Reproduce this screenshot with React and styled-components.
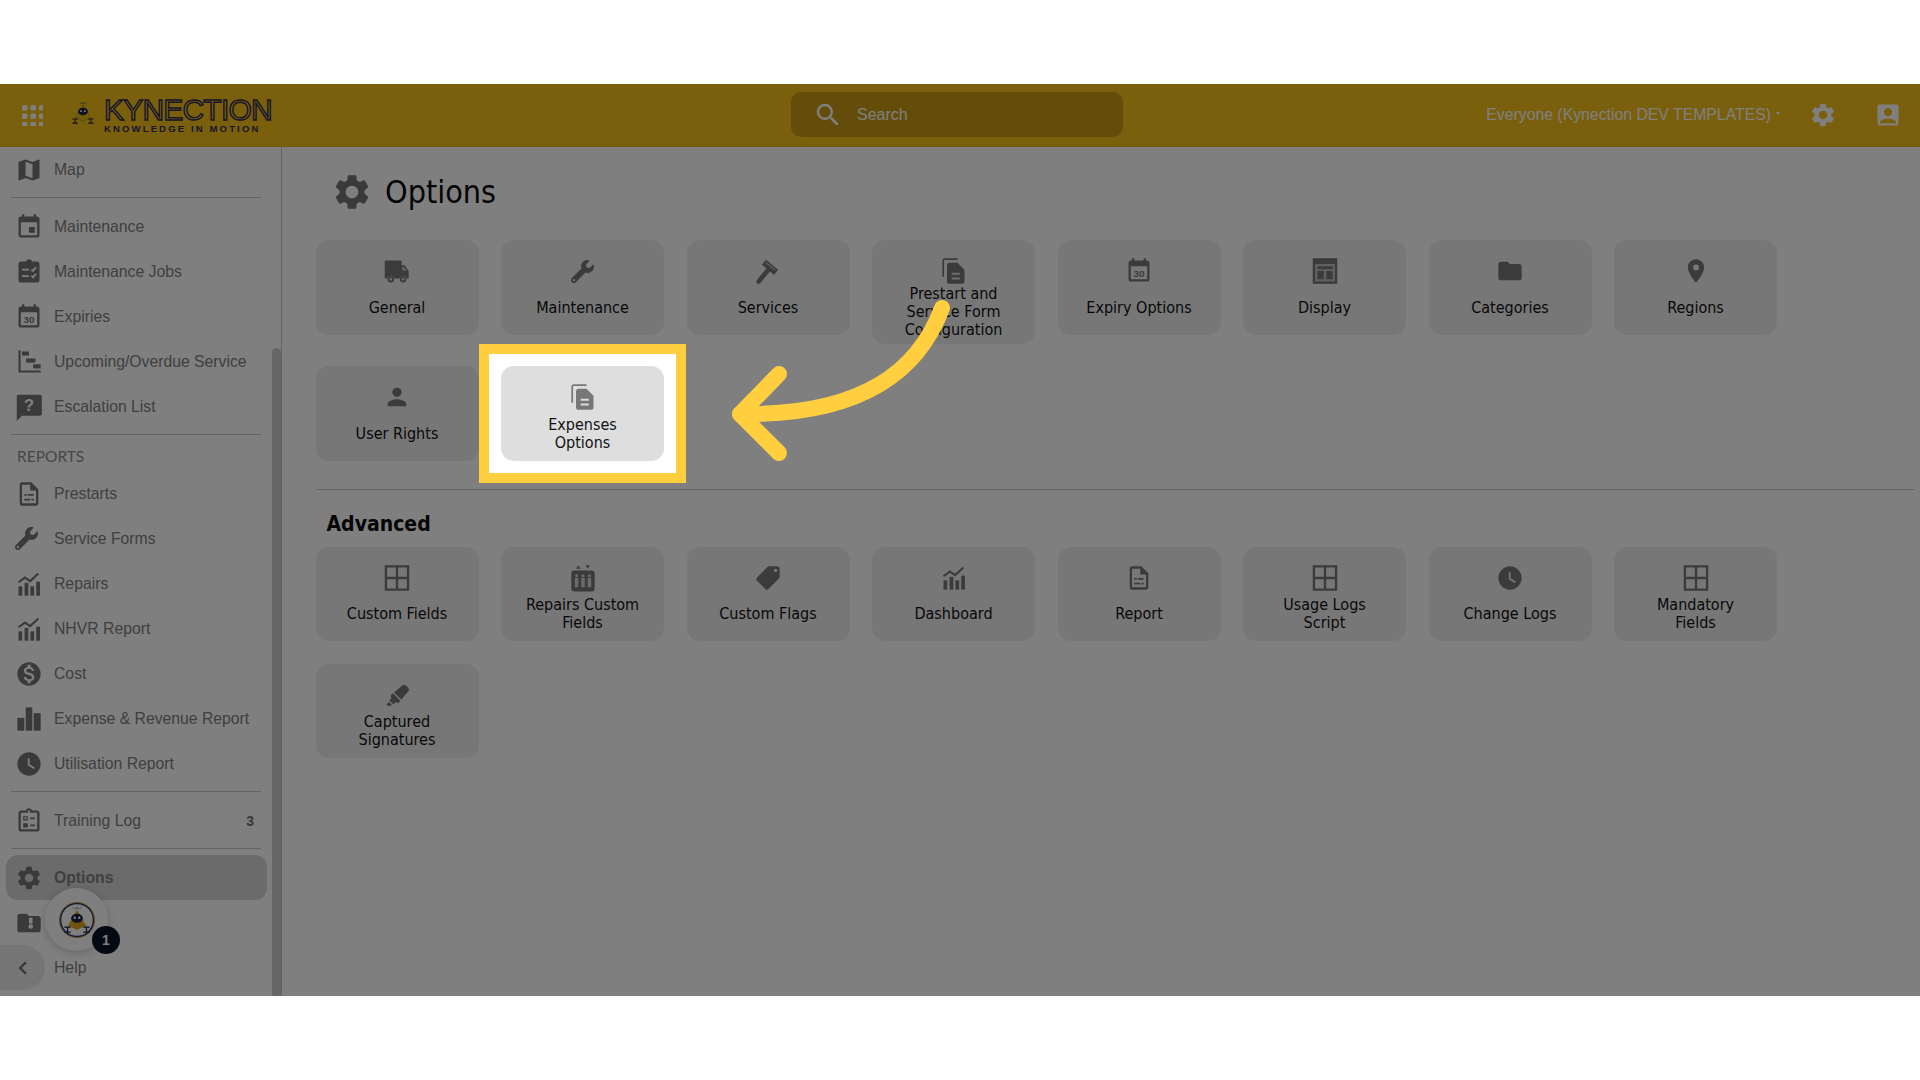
import React from 'react';
import styled, { createGlobalStyle } from 'styled-components';
import {
  MdMap, MdEvent, MdMonetizationOn, MdWatchLater, MdSettings,
  MdFolder, MdPlace, MdPerson, MdSearch, MdAccountBox, MdChevronLeft,
} from 'react-icons/md';
import { FaHighlighter, FaWrench } from 'react-icons/fa';

const GlobalStyles = createGlobalStyle`
  html { box-sizing: border-box; }
  *, *:before, *:after { box-sizing: inherit; }
  body {
    margin: 0;
    background: #fff;
    font-family: "Liberation Sans", Arial, sans-serif;
  }
`;

const Stage = styled.div`
  height: 1080px;
  padding: 84px 0;
  background: #fff;
`;

const AppFrame = styled.div`
  position: relative;
  height: 912px;
  overflow: hidden;
  display: flex;
  flex-direction: column;
  background: #fff;
`;

const TopBar = styled.header`
  flex: none;
  height: 63px;
  padding-bottom: 1px;
  display: grid;
  grid-template-columns: 791px 332px 1fr;
  align-items: center;
  background: #f5bf18;
  border-bottom: 1px solid #e3b116;
`;

const BarLeft = styled.div`
  display: flex;
  align-items: center;
  padding-left: 21px;
`;

const Waffle = styled.svg`
  width: 22px;
  height: 22px;
  fill: #fff;
  margin-right: 25px;
`;

const Brand = styled.div`
  display: flex;
  align-items: center;
  gap: 6px;
`;

const BrandMark = styled.span`
  width: 30px;
  height: 34px;
`;

const BrandText = styled.div`
  display: flex;
  flex-direction: column;
  width: 167px;
  padding-top: 2px;
`;

const BrandName = styled.span`
  font-size: 30px;
  line-height: 24px;
  height: 24px;
  letter-spacing: -0.8px;
  white-space: nowrap;
  color: #f5bf18;
  -webkit-text-stroke: 1.4px #2e2c58;
`;

const BrandTag = styled.span`
  margin-top: 2px;
  font-size: 9.5px;
  line-height: 9px;
  font-weight: 700;
  letter-spacing: 2.15px;
  white-space: nowrap;
  color: #2e2c58;
`;

const SearchBox = styled.div`
  height: 45px;
  display: flex;
  align-items: center;
  padding-left: 22px;
  gap: 12px;
  background: #c89a14;
  border-radius: 10px;
  color: #fff;
  svg { width: 30px; height: 30px; flex: none; }
`;

const SearchInput = styled.input`
  flex: 1;
  min-width: 0;
  border: none;
  outline: none;
  background: none;
  font: 16px "Liberation Sans", Arial, sans-serif;
  color: #fff;
  &::placeholder { color: #fff; opacity: 1; }
`;

const BarRight = styled.div`
  display: flex;
  align-items: center;
  justify-content: flex-end;
  padding-right: 18px;
  color: #fff;
  font-size: 15.8px;
`;

const Caret = styled.span`
  width: 0;
  height: 0;
  margin: 0 0 3px 5px;
  border-left: 2.5px solid transparent;
  border-right: 2.5px solid transparent;
  border-top: 3px solid #fff;
`;

const BarIcon = styled.span`
  display: flex;
  margin-left: ${(p) => p.$gap}px;
  svg { width: 28px; height: 28px; }
`;

const Body = styled.div`
  flex: 1;
  min-height: 0;
  display: flex;
`;

const Sidebar = styled.aside`
  position: relative;
  flex: none;
  width: 282px;
  overflow: hidden;
  background: #fff;
  border-right: 1px solid #c6c6c6;
`;

const Item = styled.div`
  height: 45px;
  display: flex;
  align-items: center;
  margin-left: 6px;
  width: 261px;
  padding: 0 13px 0 9px;
  border-radius: 12px;
  color: #808080;
  font-size: 15.75px;
  font-weight: ${(p) => (p.$active ? 700 : 400)};
  background: ${(p) => (p.$active ? '#d6d6d6' : 'transparent')};
`;

const ItemIcon = styled.span`
  flex: none;
  width: 39px;
  display: flex;
  color: #757575;
  svg { width: 28px; height: 28px; }
`;

const ItemLabel = styled.span`
  flex: 1;
  white-space: nowrap;
`;

const Count = styled.span`
  font-size: 14px;
  font-weight: 700;
  color: #757575;
`;

const SideRule = styled.hr`
  width: 250px;
  height: 1px;
  margin: 5px 0 6px 11px;
  border: none;
  background: #c6c6c6;
`;

const SideHeading = styled.div`
  height: 30px;
  padding: 6px 0 0 17px;
  font-family: Lato, sans-serif;
  font-size: 15.5px;
  color: #8f8f8f;
`;

const ScrollThumb = styled.div`
  position: absolute;
  top: 201px;
  right: 0;
  bottom: 0;
  width: 9px;
  background: #cdcdcd;
  border-radius: 6px 6px 3px 3px;
`;

const Collapse = styled.div`
  position: absolute;
  left: 0;
  top: 798px;
  width: 45px;
  height: 45px;
  display: flex;
  align-items: center;
  justify-content: center;
  border-radius: 0 23px 23px 0;
  background: #ebebeb;
  color: #666;
  svg { width: 26px; height: 26px; }
`;

const Avatar = styled.div`
  position: absolute;
  left: 45px;
  top: 741px;
  width: 63px;
  height: 63px;
  display: flex;
  align-items: center;
  justify-content: center;
  border-radius: 50%;
  background: #fff;
  box-shadow: 0 2px 8px rgba(0, 0, 0, 0.2);
  svg { width: 36px; height: 36px; }
`;

const Badge = styled.div`
  position: absolute;
  left: 92px;
  top: 779px;
  width: 28px;
  height: 28px;
  display: flex;
  align-items: center;
  justify-content: center;
  border-radius: 50%;
  background: #0b1326;
  color: #fff;
  font-size: 14px;
  font-weight: 700;
`;

const Main = styled.main`
  flex: 1;
  min-width: 0;
  padding-left: 33.5px;
  background: #fff;
`;

const TitleRow = styled.div`
  height: 93px;
  padding: 0 0 4px 15.5px;
  display: flex;
  align-items: center;
  gap: 12px;
  color: #757575;
  svg { width: 42px; height: 42px; }
`;

const Title = styled.h1`
  margin: 0;
  font-family: "DejaVu Sans Condensed", Tahoma, sans-serif;
  font-size: 32px;
  font-weight: 400;
  color: #0a0a0a;
`;

const CardGrid = styled.div`
  display: grid;
  grid-template-columns: repeat(8, 163px);
  column-gap: 22.5px;
  row-gap: ${(p) => (p.$compact ? 23 : 22)}px;
  align-items: start;
`;

const Card = styled.div`
  position: relative;
  min-height: ${(p) => (p.$compact ? 94 : 95)}px;
  padding: 17px 8px ${(p) => (p.$tall ? 5 : 3)}px;
  display: flex;
  flex-direction: column;
  align-items: center;
  border-radius: 13px;
  background: ${(p) => (p.$active ? '#dedede' : '#eeeeee')};
`;

const CardIcon = styled.span`
  display: flex;
  height: 28px;
  align-items: center;
  color: #777;
  svg { width: 28px; height: 28px; }
`;

const CardLabel = styled.div`
  min-height: ${(p) => (p.$compact ? 44 : 46)}px;
  display: flex;
  align-items: center;
  text-align: center;
  font-family: "DejaVu Sans Condensed", Tahoma, sans-serif;
  font-size: 16px;
  line-height: 18px;
  color: #111;
`;

const Rule = styled.hr`
  height: 1px;
  margin: 28px 5px 22px 0;
  border: none;
  background: #ccc;
`;

const Heading = styled.h2`
  margin: 0 0 11px 11px;
  font-family: "DejaVu Sans Condensed", Tahoma, sans-serif;
  font-size: 21px;
  line-height: 24px;
  font-weight: 700;
  color: #0a0a0a;
`;

const Spotlight = styled.div`
  position: absolute;
  inset: -22px;
  z-index: 10;
  border: 10px solid #ffcf40;
  box-shadow: 0 0 0 4000px rgba(0, 0, 0, 0.5);
  pointer-events: none;
`;

const Arrow = styled.svg`
  position: absolute;
  left: 223px;
  top: -66px;
  z-index: 11;
  width: 230px;
  height: 170px;
  fill: none;
  stroke: #ffcf40;
  stroke-width: 16;
  stroke-linecap: round;
  stroke-linejoin: round;
`;

const Wrench = styled(FaWrench)`
  && { width: 23px; height: 23px; }
`;

const Marker = styled(FaHighlighter)`
  && { width: 23px; height: 23px; }
`;

const Truck = () => (
  <svg viewBox="0 0 24 24" fill="currentColor">
    <path d="M2.5 3h12.5c.6 0 1 .4 1 1v3h2.5l3.5 5v6.5h-1.5a3.2 3.2 0 0 0-6.2 0H9.8a3.2 3.2 0 0 0-6.2 0H2.5c-.6 0-1-.4-1-1V4c0-.6.4-1 1-1z" />
    <path d="M16.5 8.5h1.5l2.3 3.3h-3.8z" fill="#fff" opacity="0.6" />
    <circle cx="6.7" cy="19" r="2.8" /><circle cx="6.7" cy="19" r="1.2" fill="#fff" opacity="0.7" />
    <circle cx="17.3" cy="19" r="2.8" /><circle cx="17.3" cy="19" r="1.2" fill="#fff" opacity="0.7" />
  </svg>
);

const Calendar30 = () => (
  <svg viewBox="0 0 24 24" fill="currentColor">
    <path d="M16 1v2H8V1H6v2H5c-1.11 0-1.99.9-1.99 2L3 19c0 1.1.89 2 2 2h14c1.1 0 2-.9 2-2V5c0-1.1-.9-2-2-2h-1V1h-2zm3 18H5V8h14v11z" />
    <text x="12" y="17.5" textAnchor="middle" fontSize="8.5" fontWeight="700" fontFamily="Liberation Sans">30</text>
  </svg>
);

const ClipCheck = () => (
  <svg viewBox="0 0 24 24" fill="currentColor">
    <path d="M19 3h-4.18C14.4 1.84 13.3 1 12 1s-2.4.84-2.82 2H5c-1.1 0-2 .9-2 2v14c0 1.1.9 2 2 2h14c1.1 0 2-.9 2-2V5c0-1.1-.9-2-2-2z" />
    <path d="M6 10h6M6 15.5h6M14 10l1.5 1 2.5-3M14 15.5l1.5 1 2.5-3" fill="none" stroke="#fff" strokeWidth="1.6" />
  </svg>
);

const Timeline = () => (
  <svg viewBox="0 0 24 24" fill="currentColor">
    <path d="M3 2h1.8v17.2H22V21H3z" />
    <rect x="6" y="3" width="6" height="3.5" />
    <rect x="9.5" y="9" width="8" height="3.5" />
    <rect x="15.5" y="14" width="6.5" height="3.5" />
  </svg>
);

const AskBubble = () => (
  <svg viewBox="0 0 24 24" fill="currentColor">
    <path d="M3 1.5h18.5c.8 0 1.5.7 1.5 1.5v15c0 .8-.7 1.5-1.5 1.5H6L1.5 24V3c0-.8.7-1.5 1.5-1.5z" />
    <text x="12" y="15.5" textAnchor="middle" fontSize="14" fontWeight="700" fontFamily="Liberation Sans" fill="#fff">?</text>
  </svg>
);

const DocList = () => (
  <svg viewBox="0 0 24 24" fill="currentColor">
    <path d="M14 2H6c-1.1 0-2 .9-2 2v16c0 1.1.89 2 1.99 2H18c1.1 0 2-.9 2-2V8l-6-6zm4 18H6V4h7v5h5v11z" />
    <path d="M8 12h2v1.6H8zM11 12h5v1.6h-5zM8 16h5v1.6H8zM14 16h2v1.6h-2z" />
  </svg>
);

const TrendBars = () => (
  <svg viewBox="0 0 24 24" fill="currentColor">
    <rect x="3" y="14" width="3.2" height="8" />
    <rect x="8.2" y="11" width="3.2" height="11" />
    <rect x="13.2" y="14" width="3.2" height="8" />
    <rect x="18.2" y="10" width="3.2" height="12" />
    <path d="M3 10.5l5.5-4 4.5 3 7-6.5" fill="none" stroke="currentColor" strokeWidth="1.8" />
  </svg>
);

const ThickBars = () => (
  <svg viewBox="0 0 24 24" fill="currentColor">
    <rect x="2" y="11" width="6" height="11" />
    <rect x="9.2" y="2" width="5.6" height="20" />
    <rect x="16" y="7" width="6" height="15" />
  </svg>
);

const TrainingClip = () => (
  <svg viewBox="0 0 24 24" fill="currentColor">
    <path d="M19 3h-4.18C14.4 1.84 13.3 1 12 1c-1.3 0-2.4.84-2.82 2H5c-1.1 0-2 .9-2 2v14c0 1.1.9 2 2 2h14c1.1 0 2-.9 2-2V5c0-1.1-.9-2-2-2zm-7 0c.55 0 1 .45 1 1s-.45 1-1 1-1-.45-1-1 .45-1 1-1zm7 16H5V5h14v14z" />
    <path d="M7 8h4v3.5H7zm1 1v1.5h2V9zM7 14h4v3.5H7zM13 9h4v1.6h-4zM13 15h4v1.6h-4z" fillRule="evenodd" />
  </svg>
);

const FolderKey = () => (
  <svg viewBox="0 0 24 24" fill="currentColor">
    <path d="M10 4H4c-1.1 0-1.99.9-1.99 2L2 18c0 1.1.9 2 2 2h16c1.1 0 2-.9 2-2V8c0-1.1-.9-2-2-2h-8l-2-2z" />
    <path d="M12 7.5h3v5h-3z" fill="#fff" />
    <circle cx="13.5" cy="15" r="2" fill="#fff" />
  </svg>
);

const DocStack = () => (
  <svg viewBox="0 0 24 24" fill="currentColor">
    <path d="M15 1H4C2.9 1 2 1.9 2 3v14h1.5V2.5H15V1z" />
    <path d="M15 5l6 6v10c0 1.1-.9 2-2 2H7.99C6.89 23 6 22.1 6 21l.01-14c0-1.1.89-2 1.99-2h7z" />
    <path d="M10 13.5h7v1.8h-7zM10 17.5h7v1.8h-7z" fill="#fff" opacity="0.75" />
  </svg>
);

const Hammer = () => (
  <svg viewBox="0 0 24 24" fill="none" stroke="currentColor" strokeLinecap="round">
    <path d="M4 21L13 10" strokeWidth="4" />
    <path d="M8.5 4.5L19 13" strokeWidth="5.5" strokeLinecap="butt" />
    <path d="M10 4.5l8 6.6" strokeWidth="1.1" stroke="#fff" strokeOpacity="0.5" strokeLinecap="butt" />
  </svg>
);

const DisplayPanel = () => (
  <svg viewBox="0 0 24 24" fill="currentColor">
    <path d="M1.5 1h21v22h-21z" />
    <path d="M3.5 6h17v15h-17z" fill="#fff" opacity="0.55" />
    <path d="M5.5 8h13v2.5h-13zM5.5 12h5.5v7H5.5zM13 12h5.5v7H13z" />
  </svg>
);

const GridPane = () => (
  <svg viewBox="0 0 24 24" fill="currentColor">
    <path d="M1.5 1h21v22h-21zM3.5 3v8h7.5V3zM13 3v8h7.5V3zM3.5 13v8h7.5v-8zM13 13v8h7.5v-8z" fillRule="evenodd" />
  </svg>
);

const ElevatorPeople = () => (
  <svg viewBox="0 0 24 24" fill="currentColor">
    <path d="M6 4l2-3 2 3zM14 1h4l-2 3z" />
    <rect x="2" y="5.5" width="20" height="18" rx="2.5" />
    <g fill="#fff" opacity="0.7">
      <circle cx="6.5" cy="10" r="1.3" /><circle cx="12" cy="10" r="1.3" /><circle cx="17.5" cy="10" r="1.3" />
      <path d="M5 12h3v8H5zM10.5 12h3v8h-3zM16 12h3v8h-3z" />
    </g>
  </svg>
);

const PriceTag = () => (
  <svg viewBox="0 0 24 24" fill="currentColor">
    <g transform="translate(24 0) scale(-1 1)">
      <path d="M21.41 11.58l-9-9C12.05 2.22 11.55 2 11 2H4c-1.1 0-2 .9-2 2v7c0 .55.22 1.05.59 1.42l9 9c.36.36.86.58 1.41.58.55 0 1.05-.22 1.41-.59l7-7c.37-.36.59-.86.59-1.41 0-.55-.23-1.06-.59-1.42zM5.5 7C4.67 7 4 6.33 4 5.5S4.67 4 5.5 4 7 4.67 7 5.5 6.33 7 5.5 7z" />
    </g>
  </svg>
);

const RobotMark = ({ ring }) => (
  <svg viewBox="0 0 40 40">
    {ring && <circle cx="20" cy="20" r="18.5" fill="#fff" stroke="#2e2c7a" strokeWidth="2" />}
    {ring && <circle cx="20" cy="20" r="19.5" fill="none" stroke="#d9a21c" strokeWidth="1" />}
    <path d="M20 5.5l-2.5 2h5zM15 5l2 3M25 5l-2 3" fill="none" stroke={ring ? '#999' : '#6d7a3a'} strokeWidth="0.8" />
    <path d="M20 9l10 17-10 5-10-5z" fill={ring ? '#e0a81c' : '#e6b81a'} stroke={ring ? 'none' : '#7d8f2a'} strokeWidth="0.8" />
    <ellipse cx="20" cy="18" rx="6.5" ry="5" fill="#1e2148" />
    <circle cx="17.5" cy="17.5" r="1.3" fill="#fff" />
    <circle cx="22.5" cy="17.5" r="1.3" fill="#fff" />
    <path d="M6 28h7M9.5 28v5M6 33.5h7M27 28h7M30.5 28v5M27 33.5h7" fill="none" stroke="#1e2148" strokeWidth="1.4" />
  </svg>
);

const sideTop = [
  { label: 'Maintenance', icon: <MdEvent /> },
  { label: 'Maintenance Jobs', icon: <ClipCheck /> },
  { label: 'Expiries', icon: <Calendar30 /> },
  { label: 'Upcoming/Overdue Service', icon: <Timeline /> },
  { label: 'Escalation List', icon: <AskBubble /> },
];

const sideReports = [
  { label: 'Prestarts', icon: <DocList /> },
  { label: 'Service Forms', icon: <Wrench /> },
  { label: 'Repairs', icon: <TrendBars /> },
  { label: 'NHVR Report', icon: <TrendBars /> },
  { label: 'Cost', icon: <MdMonetizationOn /> },
  { label: 'Expense & Revenue Report', icon: <ThickBars /> },
  { label: 'Utilisation Report', icon: <MdWatchLater /> },
];

const optionCards = [
  { label: 'General', icon: <Truck /> },
  { label: 'Maintenance', icon: <Wrench /> },
  { label: 'Services', icon: <Hammer /> },
  { label: <>Prestart and<br />Service Form<br />Configuration</>, icon: <DocStack />, tall: true },
  { label: 'Expiry Options', icon: <Calendar30 /> },
  { label: 'Display', icon: <DisplayPanel /> },
  { label: 'Categories', icon: <MdFolder /> },
  { label: 'Regions', icon: <MdPlace /> },
  { label: 'User Rights', icon: <MdPerson /> },
  { label: <>Expenses<br />Options</>, icon: <DocStack />, active: true },
];

const advancedCards = [
  { label: 'Custom Fields', icon: <GridPane /> },
  { label: <>Repairs Custom<br />Fields</>, icon: <ElevatorPeople /> },
  { label: 'Custom Flags', icon: <PriceTag /> },
  { label: 'Dashboard', icon: <TrendBars /> },
  { label: 'Report', icon: <DocList /> },
  { label: <>Usage Logs<br />Script</>, icon: <GridPane /> },
  { label: 'Change Logs', icon: <MdWatchLater /> },
  { label: <>Mandatory<br />Fields</>, icon: <GridPane /> },
  { label: <>Captured<br />Signatures</>, icon: <Marker /> },
];

function SideItem({ icon, label, count, active }) {
  return (
    <Item $active={active}>
      <ItemIcon>{icon}</ItemIcon>
      <ItemLabel>{label}</ItemLabel>
      {count ? <Count>{count}</Count> : null}
    </Item>
  );
}

function OptionCard({ icon, label, tall, active, compact }) {
  return (
    <Card $tall={tall} $active={active} $compact={compact}>
      <CardIcon>{icon}</CardIcon>
      <CardLabel $compact={compact}>{label}</CardLabel>
      {active ? (
        <>
          <Spotlight />
          <Arrow viewBox="0 0 230 170">
            <path d="M218 8C195 70 140 116 16 114" />
            <path d="M55 74L16 114L55 153" />
          </Arrow>
        </>
      ) : null}
    </Card>
  );
}

export default function App() {
  return (
    <>
      <GlobalStyles />
      <Stage>
        <AppFrame>
          <TopBar>
            <BarLeft>
              <Waffle viewBox="0 0 22 22">
                {[0, 1, 2].map((row) =>
                  [0, 1, 2].map((col) => (
                    <rect key={`${row}${col}`} x={col * 8.5 + 1} y={row * 8.5 + 1} width="5.5" height="5.5" rx="1.6" />
                  ))
                )}
              </Waffle>
              <Brand>
                <BrandMark>
                  <RobotMark />
                </BrandMark>
                <BrandText>
                  <BrandName>KYNECTION</BrandName>
                  <BrandTag>KNOWLEDGE IN MOTION</BrandTag>
                </BrandText>
              </Brand>
            </BarLeft>
            <SearchBox>
              <MdSearch />
              <SearchInput placeholder="Search" readOnly />
            </SearchBox>
            <BarRight>
              <span>Everyone (Kynection DEV TEMPLATES)</span>
              <Caret />
              <BarIcon $gap={29}><MdSettings /></BarIcon>
              <BarIcon $gap={37}><MdAccountBox /></BarIcon>
            </BarRight>
          </TopBar>
          <Body>
            <Sidebar>
              <SideItem icon={<MdMap />} label="Map" />
              <SideRule />
              {sideTop.map((item) => <SideItem key={item.label} {...item} />)}
              <SideRule />
              <SideHeading>REPORTS</SideHeading>
              {sideReports.map((item) => <SideItem key={item.label} {...item} />)}
              <SideRule />
              <SideItem icon={<TrainingClip />} label="Training Log" count="3" />
              <SideRule />
              <SideItem icon={<MdSettings />} label="Options" active />
              <SideItem icon={<FolderKey />} label="" />
              <SideItem icon={<span />} label="Help" />
              <ScrollThumb />
              <Collapse><MdChevronLeft /></Collapse>
              <Avatar><RobotMark ring /></Avatar>
              <Badge>1</Badge>
            </Sidebar>
            <Main>
              <TitleRow>
                <MdSettings />
                <Title>Options</Title>
              </TitleRow>
              <CardGrid>
                {optionCards.map((card, i) => <OptionCard key={i} {...card} />)}
              </CardGrid>
              <Rule />
              <Heading>Advanced</Heading>
              <CardGrid $compact>
                {advancedCards.map((card, i) => <OptionCard key={i} compact {...card} />)}
              </CardGrid>
            </Main>
          </Body>
        </AppFrame>
      </Stage>
    </>
  );
}
